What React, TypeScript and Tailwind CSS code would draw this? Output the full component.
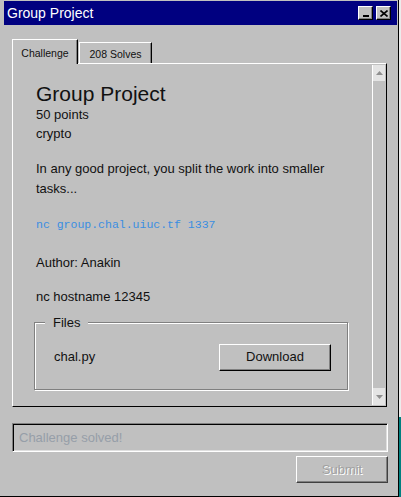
import React from 'react'

function TitleButton({ children }: { children: React.ReactNode }) {
  return (
    <div className="flex h-[14px] w-[15px] items-center justify-center border-t border-l border-t-white border-l-white border-r border-b border-r-black border-b-black bg-[#c0c0c0] shadow-[inset_-1px_-1px_0_#808080]">
      {children}
    </div>
  )
}

function Arrow({ up }: { up?: boolean }) {
  return (
    <svg width="7" height="4" viewBox="0 0 7 4">
      <polygon points={up ? '3.5,0 7,4 0,4' : '0,0 7,0 3.5,4'} fill="#8f8f8f" />
    </svg>
  )
}

export default function App() {
  return (
    <div className="flex h-[497px] w-[401px] bg-white font-['Liberation_Sans',Arial,sans-serif]">
      <div className="flex h-[497px] w-[399px] flex-col border-r border-b border-r-black border-b-black bg-[#c0c0c0]">
        {/* Title bar */}
        <div className="ml-1 mr-px mt-px flex h-[24px] items-center bg-[#000080] pl-[3px] pr-[6px]">
          <span className="flex-1 text-[14px] text-white">Group Project</span>
          <div className="flex gap-[3px]">
            <TitleButton>
              <div className="mt-[6px] h-[2px] w-[6px] bg-black" />
            </TitleButton>
            <TitleButton>
              <svg width="8" height="7" viewBox="0 0 8 7">
                <path d="M0.5 0.5 L7.5 6.5 M7.5 0.5 L0.5 6.5" stroke="black" strokeWidth="1.6" />
              </svg>
            </TitleButton>
          </div>
        </div>

        {/* Tabs */}
        <div className="ml-3 mt-[14px] flex h-[24px] items-start gap-px text-[10.5px] text-[#111]">
          <div className="relative z-10 flex h-[25px] w-[66px] justify-center border-t border-l border-r border-t-white border-l-white border-r-black bg-[#c0c0c0] pt-[6px] shadow-[inset_-1px_0_0_#808080]">
            Challenge
          </div>
          <div className="mt-[3px] flex h-[21px] w-[73px] justify-center border-t border-l border-r border-t-white border-l-white border-r-black bg-[#c0c0c0] pt-[4px] shadow-[inset_-1px_0_0_#808080]">
            208 Solves
          </div>
        </div>

        {/* Panel */}
        <div className="ml-3 flex h-[344px] w-[375px] border-t border-l border-r border-b border-t-white border-l-white border-r-black border-b-black">
          <div className="flex-1 pl-[23px] pr-[16px] pt-[18px] text-[13px] text-[#111]">
            <h1 className="text-[21px] leading-[23px]">Group Project</h1>
            <p className="leading-[19px]">50 points</p>
            <p className="leading-[19px]">crypto</p>
            <p className="mt-4 leading-[20px]">
              In any good project, you split the work into smaller tasks...
            </p>
            <p className="mt-4 font-['Liberation_Mono',monospace] text-[11.5px] leading-[20px] text-[#3a8ee0]">
              nc group.chal.uiuc.tf 1337
            </p>
            <p className="mt-[18px] leading-[20px]">Author: Anakin</p>
            <p className="mt-[14px] leading-[20px]">nc hostname 12345</p>

            <div className="relative ml-[-2px] mt-[15px] h-[68px] w-[314px] border border-[#808080] shadow-[inset_1px_1px_0_#fff,1px_1px_0_#fff]">
              <span className="absolute left-[10px] top-[-8px] bg-[#c0c0c0] px-2 leading-[16px]">
                Files
              </span>
              <div className="flex h-full items-center justify-between pl-[19px] pr-[16px] pt-[2px]">
                <span>chal.py</span>
                <div className="flex h-[27px] w-[112px] items-center justify-center border-t border-l border-r border-b border-t-white border-l-white border-r-black border-b-black shadow-[inset_-1px_-1px_0_#808080]">
                  Download
                </div>
              </div>
            </div>
          </div>

          {/* Scrollbar */}
          <div className="my-px mr-px flex w-[13px] flex-col border-l border-l-white">
            <div className="flex h-[16px] items-center justify-center bg-[#e4e4e4]">
              <Arrow up />
            </div>
            <div className="flex-1 bg-[#c0c0c0]" />
            <div className="flex h-[17px] items-center justify-center bg-[#e4e4e4]">
              <Arrow />
            </div>
          </div>
        </div>

        {/* Answer input */}
        <div className="ml-3 mt-4 flex h-[29px] w-[376px] items-center border-t border-l border-r border-b border-t-[#808080] border-l-[#808080] border-r-white border-b-white pl-[6px] text-[13px] text-[#969ea8] shadow-[inset_1px_1px_0_#000,inset_-1px_-1px_0_#dfdfdf]">
          Challenge solved!
        </div>
        <div className="ml-auto mr-[10px] mt-1 flex h-[27px] w-[92px] items-center justify-center border-t border-l border-r border-b border-t-white border-l-white border-r-[#404040] border-b-[#404040] text-[13px] text-[#a0a0a0] shadow-[inset_-1px_-1px_0_#808080] [text-shadow:1px_1px_0_#fff]">
          Submit
        </div>
      </div>
      <div className="flex w-[2px] flex-col">
        <div className="h-[417px] bg-[#ececec]" />
        <div className="flex-1 bg-[#008080]" />
      </div>
    </div>
  )
}
